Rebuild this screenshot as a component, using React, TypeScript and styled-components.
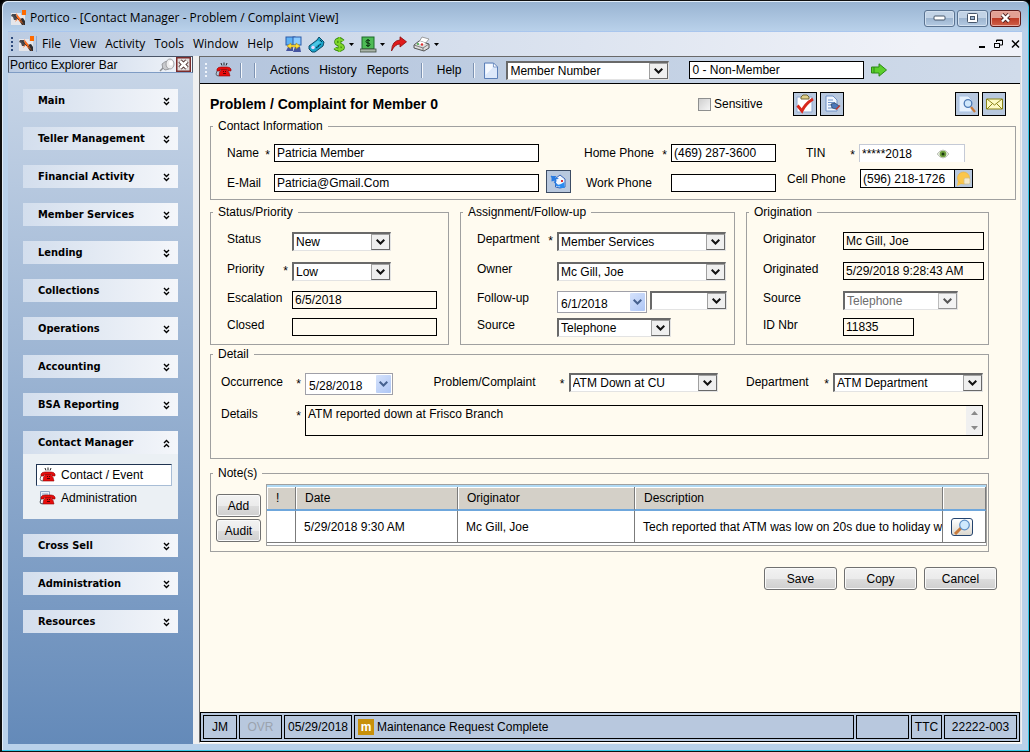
import React from "react";
import styled, { createGlobalStyle, css } from "styled-components";

const ui = `"Liberation Sans", Arial, sans-serif`;
const menuFont = `"Open Sans", "Segoe UI", sans-serif`;

const GlobalStyle = createGlobalStyle`
  *, *::before, *::after { box-sizing: border-box; }
  body { margin: 0; background: #000; font: 12px/14px ${ui}; color: #000; }
  button, input, select, textarea { font: inherit; color: inherit; margin: 0; border-radius: 0; outline: none; }
  svg { display: block; flex: none; }
`;

/* ---------- window shell ---------- */

const Window = styled.div`
  display: flex;
  flex-direction: column;
  min-height: 100vh;
  padding: 0 7px 7px 6px;
  background: linear-gradient(#98b3d1, #b9d1ea 30px);
  border: 1px solid #101010;
  border-left-width: 2px;
  border-radius: 7px 7px 0 0;
  box-shadow: inset -1px -1px 0 #35c8e8, inset 1px 1px 0 #e2edf8;
`;

const TitleBar = styled.header`
  display: flex;
  align-items: center;
  height: 30px;
  padding: 4px 1px 0 2px;
  gap: 3px;
  font-family: ${menuFont};
`;

const TitleText = styled.h1`
  flex: 1;
  margin: 0;
  font-size: 12px;
  font-weight: 400;
  line-height: 16px;
`;

const WindowButton = styled.button<{ $close?: boolean }>`
  display: grid;
  place-items: center;
  width: 31px;
  height: 17px;
  padding: 0;
  border: 1px solid ${(p) => (p.$close ? "#5b1a1a" : "#5a7391")};
  border-radius: 3px;
  box-shadow: inset 0 0 0 1px ${(p) => (p.$close ? "#e8aaa0" : "#d2e0ef")};
  background: ${(p) =>
    p.$close
      ? "linear-gradient(#e2a094 0 48%, #bd3b26 50%, #cf6049)"
      : "linear-gradient(#c2d3e6 0 48%, #9db5d0 50%, #b4cae2)"};
`;

const WindowButtons = styled.div`
  display: flex;
  gap: 2px;
`;

const MenuBar = styled.nav`
  display: flex;
  align-items: center;
  height: 25px;
  padding: 0 2px 0 3px;
  border-top: 1px solid #a9c6ee;
  background: linear-gradient(90deg, #bccce2, #f0f2f8 90%);
  font-family: ${menuFont};
`;

const Grip = styled.span<{ $light?: boolean }>`
  width: 2px;
  height: 14px;
  background: repeating-linear-gradient(${(p) => (p.$light ? "#eef3fa" : "#2d4a7c")} 0 2px, transparent 2px 4px);
`;

const MenuLogo = styled.span`
  margin-left: 5px;
  padding-right: 1px;
  border-right: 1px solid #8fa9cf;
`;

const MenuItems = styled.div`
  display: flex;
  gap: 9px;
  margin-left: 5px;
`;

const FlatButton = styled.button`
  display: flex;
  align-items: center;
  padding: 0;
  border: 0;
  background: none;
`;

const MenuIcons = styled.div`
  display: flex;
  flex: 1;
  align-items: center;
  gap: 6px;
  margin-left: 12px;
`;

const SplitButton = styled(FlatButton)`
  gap: 3px;
`;

const MdiButtons = styled.div`
  display: flex;
  gap: 8px;
`;

const Workspace = styled.div`
  display: flex;
  flex: 1;
  background: #f0f0f0;
`;

/* ---------- explorer bar ---------- */

const Explorer = styled.aside`
  display: flex;
  flex-direction: column;
  width: 185px;
`;

const ExplorerTitle = styled.div`
  display: flex;
  align-items: center;
  height: 17px;
  padding: 0 1px;
  border: 1px solid #4a5568;
  border-bottom-color: #7f9cc4;
  background: linear-gradient(90deg, #b9cae2, #f2f5fa);
`;

const ExplorerName = styled.h2`
  flex: 1;
  margin: 0;
  font-size: 12px;
  font-weight: 400;
`;

const Groups = styled.div`
  display: flex;
  flex: 1;
  flex-direction: column;
  gap: 15px;
  padding: 16px 15px;
  background: linear-gradient(#c7d5e7, #648ab9);
`;

const GroupHeader = styled.button`
  display: flex;
  align-items: center;
  justify-content: space-between;
  width: 100%;
  height: 23px;
  padding: 1px 8px 0 15px;
  border: 0;
  background: linear-gradient(90deg, #d3deed, #f4f6fa);
  font: bold 11px/14px "DejaVu Sans Condensed", "DejaVu Sans", Tahoma, sans-serif;
  font-stretch: condensed;
`;

const GroupBody = styled.div`
  display: flex;
  flex-direction: column;
  gap: 1px;
  height: 65px;
  padding: 10px 6px 0 13px;
  background: #ebf0f4;
`;

const NavItem = styled.a<{ $active?: boolean }>`
  display: flex;
  align-items: center;
  gap: 5px;
  height: 22px;
  padding-left: 2px;
  border: 1px solid transparent;
  color: #000;
  text-decoration: none;
  ${(p) =>
    p.$active &&
    css`
      background: #fff;
      border-color: #1f3350 #a8bdd6 #a8bdd6 #1f3350;
    `}
`;

/* ---------- document area ---------- */

const Document = styled.main`
  display: flex;
  flex: 1;
  flex-direction: column;
  min-width: 0;
  margin: 0 1px 1px 6px;
  border: 1px solid #696969;
  border-right-color: #d9dde4;
  border-bottom-color: #fff;
  background: #fffbf0;
`;

const ToolBar = styled.div`
  display: flex;
  align-items: center;
  height: 27px;
  padding: 0 5px;
  border-bottom: 1px solid #000;
  background: linear-gradient(90deg, #b4c5dd, #d0dbea);
`;

const ToolMenu = styled.div`
  display: flex;
  gap: 10px;
  margin: 0 12px 0 14px;
`;

const ToolIcon = styled.span`
  padding: 0 8px;
`;

const SearchFields = styled.div`
  display: flex;
  gap: 20px;
  margin: 0 7px 0 8px;
`;

const Separator = styled.span<{ $space?: number }>`
  width: 2px;
  height: 15px;
  margin-right: ${(p) => p.$space ?? 0}px;
  border-left: 1px solid #7d93b3;
  border-right: 1px solid #f4f7fb;
`;

const Form = styled.form`
  flex: 1;
  padding: 8px 4px 0 10px;
`;

const FormHeader = styled.div`
  display: flex;
  align-items: center;
  gap: 3px;
  height: 27px;
  padding: 0 10px 3px 0;
`;

const FormTitle = styled.h2`
  flex: 1;
  margin: 0;
  font-size: 14px;
  line-height: 16px;
`;

const CheckLabel = styled.label`
  display: flex;
  align-items: center;
  gap: 3px;
  width: 92px;
`;

const CheckBox = styled.input`
  appearance: none;
  width: 13px;
  height: 13px;
  border: 1px solid #8e8f8f;
  background: linear-gradient(135deg, #cfcfcf, #f6f6f6);
  &:checked { background: #3b5f94; }
`;

const IconButton = styled.button<{ $push?: boolean }>`
  display: grid;
  place-items: center;
  width: 24px;
  height: 24px;
  padding: 0;
  border: 1px solid #000;
  background: #b8c8de;
  ${(p) => p.$push && "margin-left: 108px;"}
`;

const EmailButton = styled(IconButton)`
  width: 25px;
  height: 23px;
  border-color: #3c4c64;
`;

const EmailSlot = styled.div`
  padding-top: 26px;
  margin-right: 13px;
`;

const Group = styled.fieldset`
  min-width: 0;
  margin: 0;
  padding: 0;
  border: 1px solid #a0a0a0;
`;

const Legend = styled.legend`
  margin-left: 2px;
  padding: 0 5px;
  line-height: 14px;
`;

const ContactFields = styled.div`
  display: flex;
  height: 66px;
  padding: 11px 16px 0;
`;

const FieldColumn = styled.div<{ $gap: number; $after: number }>`
  display: flex;
  flex-direction: column;
  gap: ${(p) => p.$gap}px;
  margin-right: ${(p) => p.$after}px;
`;

const Field = styled.div`
  display: flex;
  align-items: center;
`;

const Label = styled.label<{ $width: number; $indent?: number }>`
  display: flex;
  justify-content: space-between;
  flex: none;
  width: ${(p) => p.$width}px;
  padding-left: ${(p) => p.$indent ?? 0}px;
  padding-right: 4px;
  white-space: nowrap;
`;

const Star = styled.span`
  height: 14px;
  line-height: 18px;
`;

const TextBox = styled.input<{ $width?: number; $plain?: boolean }>`
  width: ${(p) => (p.$width ? p.$width + "px" : "100%")};
  min-width: 0;
  height: 18px;
  padding: 0 2px;
  border: 1px solid #000;
  background: ${(p) => (p.$plain ? "transparent" : "#fff")};
`;

const TinBox = styled.span`
  display: flex;
  align-items: center;
  width: 106px;
  height: 18px;
  border: 1px solid #c5cad6;
  border-bottom: 0;
  background: #fff;
`;

const BareInput = styled.input`
  width: 76px;
  height: 16px;
  padding: 0 0 0 2px;
  border: 0;
  background: none;
`;

const CellBox = styled.span`
  display: flex;
  width: 113px;
  height: 19px;
  border: 1px solid #000;
  background: #fff;
`;

const CellInput = styled(BareInput)`
  flex: 1;
  height: 17px;
  min-width: 0;
`;

const CellButton = styled.button`
  display: grid;
  place-items: center;
  width: 18px;
  padding: 0;
  border: 0;
  border-left: 1px solid #000;
  background: #b8c8de;
`;

const Panels = styled.div`
  display: grid;
  grid-template-columns: 239fr 275fr 243fr;
  gap: 11px;
  margin: 5px 27px 2px 0;
`;

const PanelGrid = styled.div<{ $label: number }>`
  display: grid;
  grid-template-columns: ${(p) => p.$label}px 1fr;
  grid-template-rows: 30px 29px 27px 26px;
  padding: 13px 4px 0 16px;
`;

const ControlRow = styled.div`
  display: flex;
  align-items: flex-start;
  gap: 3px;
`;

const SelectWrap = styled.span<{ $width: number; $off?: boolean }>`
  display: grid;
  grid-template-columns: 1fr 19px;
  flex: none;
  width: ${(p) => p.$width}px;
  height: 19px;
  border: solid;
  border-width: 2px 1px 1px 2px;
  border-color: #696969 #e3e3e3 #e3e3e3 #696969;
  background: #fff;
  color: ${(p) => (p.$off ? "#6d6d6d" : "#000")};
`;

const NativeSelect = styled.select`
  grid-area: 1 / 1 / 2 / 3;
  appearance: none;
  min-width: 0;
  height: 16px;
  padding: 0 19px 0 2px;
  border: 0;
  background: none;
  opacity: 1;
`;

const SelectArrow = styled.span<{ $off?: boolean }>`
  grid-area: 1 / 2;
  display: grid;
  place-items: center;
  height: 16px;
  border: 1px solid #a0a0a0;
  border-right-color: #696969;
  border-bottom-color: #696969;
  background: #efefef;
  opacity: ${(p) => (p.$off ? 0.7 : 1)};
  pointer-events: none;
`;

const DateBox = styled.span<{ $width: number }>`
  display: flex;
  flex: none;
  width: ${(p) => p.$width}px;
  height: 22px;
  border: 1px solid #a0a0a8;
  background: #fff;
`;

const DateInput = styled(BareInput)`
  flex: 1;
  min-width: 0;
  height: 20px;
  padding: 4px 0 0 3px;
`;

const DateButton = styled.button`
  display: grid;
  place-items: center;
  width: 15px;
  height: 18px;
  margin: 1px;
  padding: 0;
  border: 0;
  border-radius: 1px;
  background: linear-gradient(135deg, #d5e2fb, #aec6f5);
`;

const Detail = styled(Group)`
  margin-right: 27px;
`;

const DetailGrid = styled.div`
  display: flex;
  flex-direction: column;
  gap: 10px;
  height: 97px;
  padding: 12px 5px 0 10px;
`;

const DetailRow = styled.div`
  display: flex;
  justify-content: space-between;
`;

const LabelledControl = styled.div<{ $min?: number }>`
  display: flex;
  min-width: ${(p) => p.$min ?? 0}px;
  & > label { padding-top: 2px; }
`;

const MemoFrame = styled.div`
  display: flex;
  flex: 1;
  height: 31px;
  border: 1px solid #000;
`;

const Memo = styled.textarea`
  flex: 1;
  min-width: 0;
  padding: 1px 2px;
  border: 0;
  background: none;
  resize: none;
  overflow: hidden;
`;

const MemoScroll = styled.span`
  display: flex;
  flex-direction: column;
  align-items: center;
  justify-content: space-around;
  width: 16px;
  background: #f0f0f0;
`;

const Notes = styled(Group)`
  margin: 7px 27px 0 0;
`;

const NotesBody = styled.div`
  display: flex;
  gap: 5px;
  padding: 4px 1px 5px 5px;
`;

const NotesActions = styled.div`
  display: flex;
  flex-direction: column;
  gap: 2px;
  padding-top: 10px;
`;

const PushButton = styled.button<{ $wide?: boolean }>`
  width: ${(p) => (p.$wide ? 73 : 45)}px;
  height: 23px;
  padding: 0;
  border: 1px solid #707070;
  border-radius: 3px;
  box-shadow: inset 0 0 0 1px #fafafa;
  background: linear-gradient(#f2f2f2, #ebebeb 50%, #dddddd 51%, #cfcfcf);
`;

const TableFrame = styled.div`
  flex: 1;
  min-width: 0;
  padding-bottom: 2px;
  border: 1px solid #a0a0a0;
  background: #fff;
`;

const NotesTable = styled.table`
  width: 100%;
  table-layout: fixed;
  border-collapse: separate;
  border-spacing: 0;
  border-top: 2px solid #b0daf5;
  border-bottom: 1px solid #7b7b7b;
`;

const HeadCell = styled.th<{ $width?: number }>`
  width: ${(p) => (p.$width ? p.$width + "px" : "auto")};
  height: 24px;
  padding: 0 9px;
  border-right: 1px solid #7b7b7b;
  border-bottom: 2px solid #6fa7dc;
  background: #d4d0c8;
  box-shadow: inset 1px 1px 0 #fff;
  font-weight: 400;
  text-align: left;
`;

const Cell = styled.td`
  height: 31px;
  padding: 0 0 0 8px;
  border-right: 1px solid #7b7b7b;
  overflow: hidden;
  white-space: nowrap;
`;

const ViewButton = styled.button`
  display: grid;
  place-items: center;
  width: 22px;
  height: 18px;
  padding: 0;
  border: 1px solid #24436e;
  border-radius: 3px;
  background: linear-gradient(#fff, #dcd8cf);
`;

const FormActions = styled.div`
  display: flex;
  justify-content: flex-end;
  gap: 7px;
  padding: 15px 19px 15px 0;
`;

const StatusBar = styled.footer`
  display: flex;
  gap: 2px;
  padding: 2px;
  border: 1px solid #000;
  background: #b8c8de;
`;

const StatusCell = styled.div<{ $width?: number; $dim?: boolean; $left?: boolean }>`
  display: flex;
  align-items: center;
  justify-content: ${(p) => (p.$left ? "flex-start" : "center")};
  gap: 3px;
  ${(p) => (p.$width ? `width: ${p.$width}px;` : "flex: 1;")}
  height: 24px;
  padding: 0 3px;
  border: 1px solid #000;
  color: ${(p) => (p.$dim ? "#9ba3ae" : "#000")};
  white-space: nowrap;
`;

const AppMark = styled.span`
  display: grid;
  place-items: center;
  width: 16px;
  height: 16px;
  background: #c8910a;
  color: #fff;
  font: bold 12px/12px ${ui};
`;

/* ---------- icons ---------- */

const Logo = () => (
  <svg width="17" height="16" viewBox="0 0 17 16">
    <path d="M1 3h10v2h4v10H1z" fill="#e6e6ea" />
    <path d="M2 4l4 0 1 3v3l-3 0-1-3-2-1z" fill="#4a4a50" />
    <path d="M9 9l4-1 2 3v4l-3 0-2-3z" fill="#2c2c30" />
    <path d="M6 3l4 5 4 7-5-4-1-2-3 3 2-4z" fill="#ff6a1a" />
    <path d="M4 5l5 5M10 10l3 4" stroke="#333" strokeWidth=".8" />
    <rect x="12" y="0" width="4" height="5" fill="#ff6a00" />
  </svg>
);

const Phone = ({ note }: { note?: boolean }) => (
  <svg width="17" height="16" viewBox="0 0 17 16">
    {note ? (
      <path d="M1.500 1.500h9v12h-9zM3 4h6M3 6h6" fill="#e8effa" stroke="#8ea3c4" />
    ) : (
      <path d="M6 1l1 2.500M9 .5v3M12 1l-1 2.500" stroke="#222" />
    )}
    <path d="M2 9V7q1-2 4-2h6q3 0 4 2v2h-3V7.500H5V9z" fill="#e80c0c" stroke="#8d0000" strokeWidth=".6" />
    <path d="M6.500 7.500h5l2.500 3 1 3.500H4l.5-3.500z" fill="#e80c0c" stroke="#8d0000" strokeWidth=".6" />
    <path d="M8 9h1v1H8zM10 9h1v1h-1zM8 11h3v1H8z" fill="#5a0000" />
    <path d="M2 9l-1 3q0 2 3 2" stroke="#444" fill="none" strokeWidth=".8" />
  </svg>
);

const Network = () => (
  <svg width="17" height="17" viewBox="0 0 17 17">
    <rect x="1" y="1" width="9" height="8" fill="#5fb2f5" stroke="#2a5aa8" />
    <rect x="8" y="1" width="8" height="8" fill="#8ccbff" stroke="#2a5aa8" />
    <path d="M1 15l2-4h5v4zM8 16l2-5h5l1 5z" fill="#4454a0" />
    <path d="M2 10l4-3v2h5V7l4 3-4 3v-2H6v2z" fill="#ffe13a" stroke="#a8871c" strokeWidth=".6" />
  </svg>
);

const Organizer = () => (
  <svg width="17" height="17" viewBox="0 0 17 17">
    <path d="M1 10l8-6 2-3 2 2 3 3-1 4-8 6H4l-3-3z" fill="#19a3c9" stroke="#0c4b68" />
    <path d="M3 9.500l7-5 3 2-7 5z" fill="#4cc6e4" />
    <circle cx="5" cy="11.500" r="1.800" fill="#e9d9ff" />
    <path d="M12 4l2 2M10 10l3-2M8 12l3-2" stroke="#06384f" />
  </svg>
);

const Dollar = () => (
  <svg width="15" height="17" viewBox="-2 0 15 17">
    <path d="M10 5Q9 3.500 6 3.500 3 3.500 3 6q0 2 3 2.500 4 .5 4 3 0 2-4 2-3 0-4-1.500M6.500 1v15" fill="none" stroke="#2c7d0b" strokeWidth="3.600" />
    <path d="M10 5Q9 3.500 6 3.500 3 3.500 3 6q0 2 3 2.500 4 .5 4 3 0 2-4 2-3 0-4-1.500M6.500 1v15" fill="none" stroke="#7fd62b" strokeWidth="2.200" />
  </svg>
);

const CashDrawer = () => (
  <svg width="17" height="17" viewBox="0 0 17 17">
    <rect x="2" y="1" width="12" height="12" fill="#4dbb55" stroke="#1c6a2a" />
    <path d="M10 5Q9 4 8 4 6 4 6 5.500T8 7q2 0 2 1.500T8 10q-1 0-2-1M8 3v8" fill="none" stroke="#062c0c" />
    <rect x="0" y="13" width="16" height="3" fill="#a9b4a9" stroke="#3d4a3d" strokeWidth=".8" />
  </svg>
);

const RedArrow = () => (
  <svg width="16" height="16" viewBox="0 0 16 16">
    <path d="M.5 15Q1 4.500 9 4V.8l6.500 5L9 11V8Q4 8 .5 15z" fill="#e01b1b" stroke="#8c0a0a" strokeWidth=".8" />
  </svg>
);

const Printer = () => (
  <svg width="18" height="16" viewBox="0 0 18 16">
    <path d="M9 1l7 2-4 5-6-2z" fill="#fff" stroke="#888" strokeWidth=".8" />
    <path d="M1 9l5-4 10 3v4l-5 3-10-3z" fill="#dcdcdc" stroke="#444" strokeWidth=".9" />
    <path d="M1 9l9 3 6-4M10 12v3" fill="none" stroke="#666" strokeWidth=".8" />
    <path d="M7 5l6 2-3 2-5-2z" fill="#fff" />
    <circle cx="9" cy="8.500" r="1.200" fill="#e03030" />
    <circle cx="5" cy="8" r=".9" fill="#2ea82e" />
  </svg>
);

const Caret = () => (
  <svg width="5" height="3" viewBox="0 0 5 3"><path d="M0 0h5L2.500 3z" /></svg>
);

const Pin = () => (
  <svg width="17" height="14" viewBox="0 0 17 14">
    <path d="M5 9l-4 4" stroke="#8b8d90" strokeWidth="1.400" />
    <path d="M3 6q3-3 6-3l3 6q-2 3-6 3-3-1-3-6z" fill="#c9cacd" stroke="#8b8d90" strokeWidth=".8" />
    <ellipse cx="11" cy="6" rx="4" ry="5" fill="#ededee" stroke="#8f9194" strokeWidth=".8" />
    <ellipse cx="12" cy="5" rx="2" ry="2.500" fill="#fff" />
  </svg>
);

const BarClose = () => (
  <svg width="15" height="15" viewBox="0 0 15 15">
    <rect x=".75" y=".75" width="13.500" height="13.500" fill="#e2dede" stroke="#7a2b2b" strokeWidth="1.500" />
    <path d="M4 4l7 7M11 4l-7 7" stroke="#40201f" strokeWidth="4.400" />
    <path d="M4 4l7 7M11 4l-7 7" stroke="#fff" strokeWidth="2.600" />
  </svg>
);

const Chevrons = ({ up }: { up?: boolean }) => (
  <svg width="7" height="9" viewBox="0 0 7 9">
    <path
      d={up ? "M1 4l2.500-2.500L6 4M1 8l2.500-2.500L6 8" : "M1 1l2.500 2.500L6 1M1 5l2.500 2.500L6 5"}
      fill="none"
      stroke="#000"
      strokeWidth="1.400"
    />
  </svg>
);

const Chevron = ({ color = "#111" }: { color?: string }) => (
  <svg width="9" height="6" viewBox="0 0 9 6">
    <path d="M.7.8l3.800 3.700L8.300.8" fill="none" stroke={color} strokeWidth="2" />
  </svg>
);

const Page = () => (
  <svg width="14" height="17" viewBox="0 0 14 17">
    <path d="M.5 1h9l4 4v11.500H.5z" fill="#dce8fa" stroke="#5b7fb8" />
    <path d="M1.500 2h7v4l-7 7z" fill="#f5f9ff" />
    <path d="M9.500 1v4h4z" fill="#fff" stroke="#5b7fb8" strokeWidth=".7" />
  </svg>
);

const GoArrow = () => (
  <svg width="16" height="14" viewBox="0 0 16 14">
    <path d="M.5 4H8V.8L15.500 7 8 13.200V10H.5z" fill="#5bcf2c" stroke="#2d8a16" />
    <path d="M3 4v6" stroke="#2d8a16" />
  </svg>
);

const Clipboard = () => (
  <svg width="20" height="20" viewBox="0 0 20 20">
    <path d="M2 3h15v15H2z" fill="#fff" stroke="#8fa9d2" />
    <path d="M6 5V3l2-2h4l2 2v2z" fill="#e0d08a" stroke="#6f6434" />
    <path d="M2.500 11.500L7 17Q10 10 18 5" fill="none" stroke="#d8281c" strokeWidth="2.800" />
  </svg>
);

const PageEdit = () => (
  <svg width="17" height="18" viewBox="0 0 17 18">
    <path d="M2 1h7l4 4v11H2z" fill="#f2f7ff" stroke="#6f92c8" />
    <path d="M4 5h5M4 7.500h7M4 10h4M4 13h4" stroke="#6f92c8" />
    <path d="M7 9l4-1 4 3-3 3-4-1z" fill="#4c78ba" stroke="#223a60" strokeWidth=".7" />
    <path d="M12 14.500l4-4" stroke="#c03a30" strokeWidth="1.400" />
  </svg>
);

const PagePreview = () => (
  <svg width="18" height="18" viewBox="0 0 18 18">
    <path d="M1 1h9l4 4v12H1z" fill="#e6f1fd" stroke="#a9c3e6" />
    <circle cx="10" cy="8.500" r="3.800" fill="#cfe7fb" stroke="#4c79b5" strokeWidth="1.300" />
    <path d="M13 12l4 5" stroke="#c9793a" strokeWidth="2.200" />
  </svg>
);

const Envelope = () => (
  <svg width="17" height="12" viewBox="0 0 17 12">
    <path d="M.5 1h16v10H.5z" fill="#fdfbc4" stroke="#8a8416" />
    <path d="M1 1l7.500 6L16 1M1 11l5-5M16 11l-5-5" fill="none" stroke="#8a8416" />
  </svg>
);

const MailSync = () => (
  <svg width="17" height="17" viewBox="0 0 17 17">
    <path d="M5.500 5.500L10 2l5 4v8l-5 1-4.500-1z" fill="#f2f7ff" stroke="#3764b8" />
    <rect x="11" y="7" width="2" height="2" fill="#d33" />
    <path d="M1 3l5 5-1.500 1L8 13" fill="none" stroke="#2a7be0" strokeWidth="1.200" />
    <path d="M1.500 8.500V3h5L5 4.500q3 0 4 1.500-3-.5-4 1.500z" fill="#2a7be0" />
    <path d="M14.500 9v6H8.500l2-1.500Q6 14 5 11q3 1.500 6 0z" fill="#2a8bf0" />
  </svg>
);

const Eye = () => (
  <svg width="14" height="10" viewBox="0 0 14 10">
    <path d="M1 5q6-8 12 0-6 8-12 0z" fill="#e4e8de" stroke="#b6bbb0" strokeWidth=".8" />
    <circle cx="7" cy="5" r="3.300" fill="#6fa03c" />
    <circle cx="7" cy="5" r="1.500" fill="#1d3a10" />
  </svg>
);

const Chat = () => (
  <svg width="16" height="16" viewBox="0 0 16 16">
    <path d="M2 10l-1 5 6-3z" fill="#fbc64b" />
    <circle cx="7.500" cy="7" r="6" fill="#fbc64b" stroke="#e9b23a" strokeWidth=".6" />
    <rect x="8" y="7" width="6" height="6" rx="1.500" fill="#f3ead0" stroke="#cdbf92" strokeWidth=".8" />
  </svg>
);

const Magnifier = () => (
  <svg width="18" height="16" viewBox="0 0 18 16">
    <path d="M2 15l6-6" stroke="#c87a3b" strokeWidth="3" />
    <circle cx="11.500" cy="6" r="4.800" fill="#cfe9fd" stroke="#5e8fc6" strokeWidth="1.200" />
  </svg>
);

const Triangle = ({ down }: { down?: boolean }) => (
  <svg width="7" height="4" viewBox="0 0 7 4">
    <path d={down ? "M0 0h7L3.500 4z" : "M0 4h7L3.500 0z"} fill="#8a8a8a" />
  </svg>
);

/* ---------- composed controls ---------- */

type SelectProps = { id?: string; name: string; value: string; width: number; disabled?: boolean };

const Select = ({ id, name, value, width, disabled }: SelectProps) => (
  <SelectWrap $width={width} $off={disabled}>
    <NativeSelect id={id} aria-label={id ? undefined : name} defaultValue={value} disabled={disabled}>
      <option>{value}</option>
    </NativeSelect>
    <SelectArrow $off={disabled}><Chevron /></SelectArrow>
  </SelectWrap>
);

const DateField = ({ id, value, width }: { id: string; value: string; width: number }) => (
  <DateBox $width={width}>
    <DateInput id={id} defaultValue={value} />
    <DateButton type="button" aria-label="Open calendar"><Chevron color="#46618f" /></DateButton>
  </DateBox>
);

type CaptionProps = { htmlFor: string; width: number; indent?: number; required?: boolean; children: React.ReactNode };

const Caption = ({ htmlFor, width, indent, required, children }: CaptionProps) => (
  <Label htmlFor={htmlFor} $width={width} $indent={indent}>
    <span>{children}</span>
    {required && <Star>*</Star>}
  </Label>
);

const groupsAbove = ["Main", "Teller Management", "Financial Activity", "Member Services", "Lending", "Collections", "Operations", "Accounting", "BSA Reporting"];
const groupsBelow = ["Cross Sell", "Administration", "Resources"];

const ClosedGroup = ({ name }: { name: string }) => (
  <GroupHeader type="button" aria-expanded="false">{name}<Chevrons /></GroupHeader>
);

const ExplorerBar = () => (
  <Explorer>
    <ExplorerTitle>
      <ExplorerName>Portico Explorer Bar</ExplorerName>
      <FlatButton aria-label="Pin"><Pin /></FlatButton>
      <FlatButton aria-label="Close bar"><BarClose /></FlatButton>
    </ExplorerTitle>
    <Groups>
      {groupsAbove.map((g) => <ClosedGroup key={g} name={g} />)}
      <div>
        <GroupHeader type="button" aria-expanded="true">Contact Manager<Chevrons up /></GroupHeader>
        <GroupBody>
          <NavItem href="#contact" $active><Phone />Contact / Event</NavItem>
          <NavItem href="#administration"><Phone note />Administration</NavItem>
        </GroupBody>
      </div>
      {groupsBelow.map((g) => <ClosedGroup key={g} name={g} />)}
    </Groups>
  </Explorer>
);

const DocumentToolBar = () => (
  <ToolBar>
    <Grip $light />
    <FlatButton aria-label="Contact"><ToolIcon><Phone /></ToolIcon></FlatButton>
    <Separator $space={12} />
    <Separator />
    <ToolMenu>
      <FlatButton>Actions</FlatButton>
      <FlatButton>History</FlatButton>
      <FlatButton>Reports</FlatButton>
    </ToolMenu>
    <Separator />
    <ToolMenu><FlatButton>Help</FlatButton></ToolMenu>
    <Separator $space={9} />
    <FlatButton aria-label="New"><Page /></FlatButton>
    <SearchFields>
      <Select name="Search by" value="Member Number" width={163} />
      <TextBox aria-label="Member" defaultValue="0 - Non-Member" $width={175} />
    </SearchFields>
    <FlatButton aria-label="Go"><GoArrow /></FlatButton>
  </ToolBar>
);

const ContactInformation = () => (
  <Group>
    <Legend>Contact Information</Legend>
    <ContactFields>
      <FieldColumn $gap={12} $after={7}>
        <Field><Caption htmlFor="name" width={47} required>Name</Caption><TextBox id="name" defaultValue="Patricia Member" $width={265} /></Field>
        <Field><Caption htmlFor="email" width={47}>E-Mail</Caption><TextBox id="email" defaultValue="Patricia@Gmail.Com" $width={265} /></Field>
      </FieldColumn>
      <EmailSlot><EmailButton type="button" aria-label="Send e-mail"><MailSync /></EmailButton></EmailSlot>
      <FieldColumn $gap={12} $after={11}>
        <Field><Caption htmlFor="home" width={87} required>Home Phone</Caption><TextBox id="home" defaultValue="(469) 287-3600" $width={105} /></Field>
        <Field><Caption htmlFor="work" width={87} indent={2}>Work Phone</Caption><TextBox id="work" $width={105} /></Field>
      </FieldColumn>
      <FieldColumn $gap={7} $after={0}>
        <Field>
          <Caption htmlFor="tin" width={72} indent={19} required>TIN</Caption>
          <TinBox><BareInput id="tin" defaultValue="*****2018" /><Eye /></TinBox>
        </Field>
        <Field>
          <Caption htmlFor="cell" width={73}>Cell Phone</Caption>
          <CellBox><CellInput id="cell" defaultValue="(596) 218-1726" /><CellButton type="button" aria-label="Send text"><Chat /></CellButton></CellBox>
        </Field>
      </FieldColumn>
    </ContactFields>
  </Group>
);

export default function App() {
  return (
    <>
      <GlobalStyle />
      <Window>
        <TitleBar>
          <Logo />
          <TitleText>Portico - [Contact Manager - Problem / Complaint View]</TitleText>
          <WindowButtons>
            <WindowButton aria-label="Minimize"><svg width="13" height="6"><rect x="1" y="1" width="11" height="4" rx="1" fill="#fff" stroke="#46566b" /></svg></WindowButton>
            <WindowButton aria-label="Maximize"><svg width="13" height="10"><rect x="1.500" y=".5" width="10" height="9" rx="1" fill="#fff" stroke="#46566b" /><rect x="4.500" y="3.500" width="4" height="3" fill="#9db5d0" stroke="#46566b" /></svg></WindowButton>
            <WindowButton $close aria-label="Close"><svg width="13" height="10"><path d="M3 1.500l7 7M10 1.500l-7 7" stroke="#4b2020" strokeWidth="4" /><path d="M3 1.500l7 7M10 1.500l-7 7" stroke="#fff" strokeWidth="2.400" /></svg></WindowButton>
          </WindowButtons>
        </TitleBar>
        <MenuBar>
          <Grip />
          <MenuLogo><Logo /></MenuLogo>
          <MenuItems>
            {["File", "View", "Activity", "Tools", "Window", "Help"].map((m) => <FlatButton key={m}>{m}</FlatButton>)}
          </MenuItems>
          <MenuIcons>
            <FlatButton aria-label="Network"><Network /></FlatButton>
            <FlatButton aria-label="Organizer"><Organizer /></FlatButton>
            <SplitButton aria-label="Cash"><Dollar /><Caret /></SplitButton>
            <SplitButton aria-label="Drawer"><CashDrawer /><Caret /></SplitButton>
            <FlatButton aria-label="Forward"><RedArrow /></FlatButton>
            <SplitButton aria-label="Print"><Printer /><Caret /></SplitButton>
          </MenuIcons>
          <MdiButtons>
            <FlatButton aria-label="Minimize view"><svg width="7" height="10"><rect y="7" width="6" height="2" /></svg></FlatButton>
            <FlatButton aria-label="Restore view"><svg width="9" height="10"><path d="M2.500 3V1h6v5H6M0.500 4.500h5v4h-5zM2 1.500h7M0 4.500h6" fill="none" stroke="#000" /></svg></FlatButton>
            <FlatButton aria-label="Close view"><svg width="9" height="10"><path d="M1 1.500l7 7M8 1.500l-7 7" stroke="#000" strokeWidth="1.500" /></svg></FlatButton>
          </MdiButtons>
        </MenuBar>
        <Workspace>
          <ExplorerBar />
          <Document>
            <DocumentToolBar />
            <Form onSubmit={(e) => e.preventDefault()}>
              <FormHeader>
                <FormTitle>Problem / Complaint for Member 0</FormTitle>
                <CheckLabel><CheckBox type="checkbox" />Sensitive</CheckLabel>
                <IconButton type="button" aria-label="Complete"><Clipboard /></IconButton>
                <IconButton type="button" aria-label="Edit"><PageEdit /></IconButton>
                <IconButton type="button" $push aria-label="Preview"><PagePreview /></IconButton>
                <IconButton type="button" aria-label="Mail"><Envelope /></IconButton>
              </FormHeader>

              <ContactInformation />

              <Panels>
                <Group>
                  <Legend>Status/Priority</Legend>
                  <PanelGrid $label={65}>
                    <Caption htmlFor="status" width={65}>Status</Caption>
                    <Select id="status" name="Status" value="New" width={99} />
                    <Caption htmlFor="priority" width={65} required>Priority</Caption>
                    <Select id="priority" name="Priority" value="Low" width={99} />
                    <Caption htmlFor="escalation" width={65}>Escalation</Caption>
                    <TextBox id="escalation" defaultValue="6/5/2018" $width={145} $plain />
                    <Caption htmlFor="closed" width={65}>Closed</Caption>
                    <TextBox id="closed" $width={145} $plain />
                  </PanelGrid>
                </Group>
                <Group>
                  <Legend>Assignment/Follow-up</Legend>
                  <PanelGrid $label={80}>
                    <Caption htmlFor="dept" width={80} required>Department</Caption>
                    <Select id="dept" name="Department" value="Member Services" width={169} />
                    <Caption htmlFor="owner" width={80}>Owner</Caption>
                    <Select id="owner" name="Owner" value="Mc Gill, Joe" width={169} />
                    <Caption htmlFor="followup" width={80}>Follow-up</Caption>
                    <ControlRow>
                      <DateField id="followup" value="6/1/2018" width={90} />
                      <Select name="Follow-up time" value="" width={77} />
                    </ControlRow>
                    <Caption htmlFor="source" width={80}>Source</Caption>
                    <Select id="source" name="Source" value="Telephone" width={114} />
                  </PanelGrid>
                </Group>
                <Group>
                  <Legend>Origination</Legend>
                  <PanelGrid $label={80}>
                    <Caption htmlFor="originator" width={80}>Originator</Caption>
                    <TextBox id="originator" defaultValue="Mc Gill, Joe" $width={141} $plain />
                    <Caption htmlFor="originated" width={80}>Originated</Caption>
                    <TextBox id="originated" defaultValue="5/29/2018 9:28:43 AM" $width={141} $plain />
                    <Caption htmlFor="osource" width={80}>Source</Caption>
                    <Select id="osource" name="Source" value="Telephone" width={115} disabled />
                    <Caption htmlFor="idnbr" width={80}>ID Nbr</Caption>
                    <TextBox id="idnbr" defaultValue="11835" $width={71} $plain />
                  </PanelGrid>
                </Group>
              </Panels>

              <Detail>
                <Legend>Detail</Legend>
                <DetailGrid>
                  <DetailRow>
                    <LabelledControl $min={184}>
                      <Caption htmlFor="occurrence" width={84} required>Occurrence</Caption>
                      <DateField id="occurrence" value="5/28/2018" width={88} />
                    </LabelledControl>
                    <LabelledControl>
                      <Caption htmlFor="problem" width={135} required>Problem/Complaint</Caption>
                      <Select id="problem" name="Problem" value="ATM Down at CU" width={149} />
                    </LabelledControl>
                    <LabelledControl>
                      <Caption htmlFor="ddept" width={87} required>Department</Caption>
                      <Select id="ddept" name="Department" value="ATM Department" width={150} />
                    </LabelledControl>
                  </DetailRow>
                  <LabelledControl>
                    <Caption htmlFor="details" width={84} required>Details</Caption>
                    <MemoFrame>
                      <Memo id="details" defaultValue="ATM reported down at Frisco Branch" />
                      <MemoScroll><Triangle /><Triangle down /></MemoScroll>
                    </MemoFrame>
                  </LabelledControl>
                </DetailGrid>
              </Detail>

              <Notes>
                <Legend>Note(s)</Legend>
                <NotesBody>
                  <NotesActions>
                    <PushButton type="button">Add</PushButton>
                    <PushButton type="button">Audit</PushButton>
                  </NotesActions>
                  <TableFrame>
                    <NotesTable>
                      <thead>
                        <tr>
                          <HeadCell $width={29}>!</HeadCell>
                          <HeadCell $width={162}>Date</HeadCell>
                          <HeadCell $width={177}>Originator</HeadCell>
                          <HeadCell>Description</HeadCell>
                          <HeadCell $width={43} aria-label="View" />
                        </tr>
                      </thead>
                      <tbody>
                        <tr>
                          <Cell />
                          <Cell>5/29/2018 9:30 AM</Cell>
                          <Cell>Mc Gill, Joe</Cell>
                          <Cell>Tech reported that ATM was low on 20s due to holiday w</Cell>
                          <Cell><ViewButton type="button" aria-label="View note"><Magnifier /></ViewButton></Cell>
                        </tr>
                      </tbody>
                    </NotesTable>
                  </TableFrame>
                </NotesBody>
              </Notes>

              <FormActions>
                <PushButton $wide>Save</PushButton>
                <PushButton $wide type="button">Copy</PushButton>
                <PushButton $wide type="button">Cancel</PushButton>
              </FormActions>
            </Form>
            <StatusBar>
              <StatusCell $width={34}>JM</StatusCell>
              <StatusCell $width={43} $dim>OVR</StatusCell>
              <StatusCell $width={68}>05/29/2018</StatusCell>
              <StatusCell $left><AppMark>m</AppMark>Maintenance Request Complete</StatusCell>
              <StatusCell $width={53} />
              <StatusCell $width={31}>TTC</StatusCell>
              <StatusCell $width={73}>22222-003</StatusCell>
            </StatusBar>
          </Document>
        </Workspace>
      </Window>
    </>
  );
}
